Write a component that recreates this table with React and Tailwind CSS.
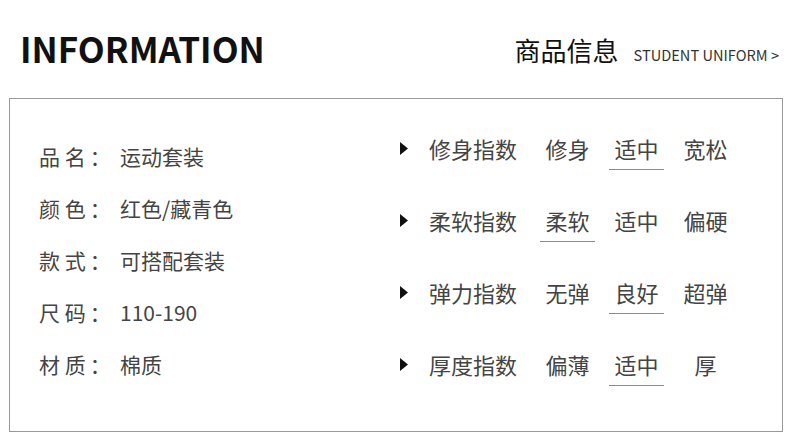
const specs = [
  ["品 名", "运动套装"],
  ["颜 色", "红色/藏青色"],
  ["款 式", "可搭配套装"],
  ["尺 码", "110-190"],
  ["材 质", "棉质"],
];

const indexes = [
  { label: "修身指数", options: ["修身", "适中", "宽松"], active: 1 },
  { label: "柔软指数", options: ["柔软", "适中", "偏硬"], active: 0 },
  { label: "弹力指数", options: ["无弹", "良好", "超弹"], active: 1 },
  { label: "厚度指数", options: ["偏薄", "适中", "厚"], active: 1 },
];

const font = {
  fontFamily: '"Noto Sans CJK SC", "Noto Sans", sans-serif',
};

function IndexRow({ item }) {
  return (
    <div className="flex h-[72px] items-center">
      <div className="flex items-center pb-[8px]">
        <svg width="8" height="13" viewBox="0 0 8 13" className="mr-[21px]">
          <path d="M0 0 L8 6.5 L0 13 Z" fill="#111" />
        </svg>
        <span className="w-[111px] text-[22px] leading-[28px] text-[#444]">
          {item.label}
        </span>
      </div>
      <div className="flex gap-[14px]">
        {item.options.map((opt, i) => (
          <span
            key={opt + i}
            className={
              "w-[55px] pb-[7px] text-center text-[22px] leading-[28px] text-[#444] border-b " +
              (i === item.active ? "border-[#8a8a8a]" : "border-transparent")
            }
          >
            {opt}
          </span>
        ))}
      </div>
    </div>
  );
}

export default function App() {
  return (
    <div className="w-[790px] h-[448px] bg-white" style={font}>
      <div className="flex h-[98px] items-center justify-between pl-[20px] pr-[11px] pb-[3px]">
        <h1 className="text-[35px] font-bold leading-none text-[#111]">
          INFORMATION
        </h1>
        <div className="flex items-baseline gap-[15px] pt-[5px]">
          <span className="text-[26px] leading-none text-[#111]">商品信息</span>
          <span className="text-[14.6px] leading-none text-[#333]">
            STUDENT UNIFORM &gt;
          </span>
        </div>
      </div>
      <div className="mx-[9px] flex h-[334px] w-[774px] border border-[#999]">
        <div className="w-[390px] pl-[29px] pt-[32px]">
          {specs.map(([k, v]) => (
            <div key={k} className="flex h-[52px] items-center text-[21px] text-[#444]">
              <span className="flex w-[81px] whitespace-pre">
                {k}
                <span className="ml-[4px]">：</span>
              </span>
              <span>{v}</span>
            </div>
          ))}
        </div>
        <div className="pt-[17px]">
          {indexes.map((item) => (
            <IndexRow key={item.label} item={item} />
          ))}
        </div>
      </div>
    </div>
  );
}
